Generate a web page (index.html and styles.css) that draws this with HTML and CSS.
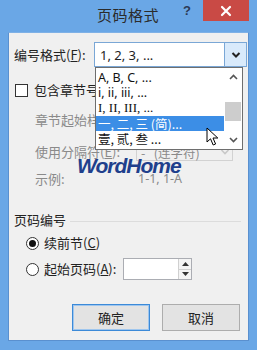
FILE: index.html
```html
<!DOCTYPE html>
<html>
<head>
<meta charset="utf-8">
<link rel="stylesheet" href="styles.css">
</head>
<body>
<div class="window">
  <div class="titlebar">
    <div class="title">页码格式</div>
    <div class="help">?</div>
    <div class="close">
      <svg width="12" height="12" viewBox="0 0 12 12"><path d="M2 2 L10 10 M10 2 L2 10" stroke="#fff" stroke-width="2.2" stroke-linecap="round"/></svg>
    </div>
  </div>
  <div class="client">
    <div class="row row-format">
      <span class="label">编号格式(<u>F</u>):</span>
      <div class="select focus">
        <span class="sel-text">1, 2, 3, ...</span>
        <span class="sel-btn focus-btn">
          <svg width="10" height="8" viewBox="0 0 10 8"><path d="M1.5 2 L5 5.5 L8.5 2" stroke="#222" stroke-width="2" fill="none"/></svg>
        </span>
      </div>
    </div>

    <div class="row row-check">
      <span class="checkbox"></span>
      <span class="label">包含章节号(<u>N</u>)</span>
    </div>

    <div class="indent">
      <div class="row row-sub">
        <span class="label dis">章节起始样式(<u>P</u>):</span>
        <div class="select dis-sel small"><span class="sel-text">标题 1</span></div>
      </div>
      <div class="row row-sub">
        <span class="label dis">使用分隔符(<u>E</u>):</span>
        <div class="select dis-sel small">
          <span class="sel-text">-&nbsp;&nbsp; (连字符)</span>
          <span class="sel-btn dis-btn">
            <svg width="10" height="8" viewBox="0 0 10 8"><path d="M1.5 2 L5 5.5 L8.5 2" stroke="#c8c8c8" stroke-width="1.6" fill="none"/></svg>
          </span>
        </div>
      </div>
      <div class="row row-example">
        <span class="label dis ex-label">示例:</span>
        <span class="label dis ex-val">1-1, 1-A</span>
      </div>
    </div>

    <div class="group-head">
      <span class="label">页码编号</span>
      <span class="rule"></span>
    </div>

    <div class="row row-radio">
      <span class="radio checked"><span class="dot"></span></span>
      <span class="label">续前节(<u>C</u>)</span>
    </div>
    <div class="row row-radio2">
      <span class="radio"></span>
      <span class="label">起始页码(<u>A</u>):</span>
      <div class="spin">
        <span class="spin-field"></span>
        <span class="spin-btns">
          <span class="spin-b"><svg width="7" height="4" viewBox="0 0 7 4"><path d="M0 4 L3.5 0 L7 4Z" fill="#333"/></svg></span>
          <span class="spin-b"><svg width="7" height="4" viewBox="0 0 7 4"><path d="M0 0 L3.5 4 L7 0Z" fill="#333"/></svg></span>
        </span>
      </div>
    </div>

    <div class="buttons">
      <button class="btn default">确定</button>
      <button class="btn">取消</button>
    </div>

    <div class="dropdown">
      <div class="items">
        <div class="item">A, B, C, ...</div>
        <div class="item">i, ii, iii, ...</div>
        <div class="item serif">I, II, III, ...</div>
        <div class="item sel">一, 二, 三 (简)...</div>
        <div class="item">壹, 贰, 叁 ...</div>
      </div>
      <div class="scroll">
        <span class="sc-arrow"><svg width="9" height="6" viewBox="0 0 9 6"><path d="M1 5 L4.5 1.5 L8 5" stroke="#555" stroke-width="1.6" fill="none"/></svg></span>
        <span class="sc-track"><span class="sc-thumb"></span></span>
        <span class="sc-arrow"><svg width="9" height="6" viewBox="0 0 9 6"><path d="M1 1 L4.5 4.5 L8 1" stroke="#555" stroke-width="1.6" fill="none"/></svg></span>
      </div>
    </div>

    <div class="watermark">WordHome</div>

    <svg class="cursor" width="13" height="20" viewBox="0 0 13 20"><path d="M1 1 L1 15 L4.5 11.8 L7.2 18 L9.6 17 L7 11 L11.8 11 Z" fill="#fff" stroke="#000" stroke-width="1"/></svg>
  </div>
</div>
</body>
</html>
```

FILE: styles.css
```css
* { box-sizing: border-box; }
html, body { margin: 0; padding: 0; }
body {
  width: 257px;
  height: 350px;
  overflow: hidden;
  font-family: "Noto Sans CJK SC", "Noto Sans", sans-serif;
  font-size: 13px;
  color: #222;
}
u { text-decoration: underline; text-underline-offset: 1px; }
.window {
  width: 257px;
  height: 350px;
  background: #6aa7e6;
  display: flex;
  flex-direction: column;
}
.titlebar {
  height: 32px;
  display: flex;
  align-items: flex-start;
  padding-left: 97px;
}
.title {
  font-size: 15px;
  color: #2b2b2b;
  line-height: 30px;
  letter-spacing: 0.5px;
}
.help {
  margin-left: auto;
  margin-right: 12px;
  font-family: "Liberation Sans", sans-serif;
  font-weight: bold;
  font-size: 13px;
  color: #2c3a55;
  line-height: 22px;
}
.close {
  width: 46px;
  height: 21px;
  margin-right: 8px;
  background: #c94a45;
  display: flex;
  align-items: center;
  justify-content: center;
}
.client {
  position: relative;
  margin: 0 8px;
  height: 309px;
  background: #f0f0f0;
  border: 1px solid #5a90cf;
  border-top-color: #7fb1e6;
  padding: 9px 0 0 5px;
}
.row { display: flex; align-items: center; }
.label { white-space: nowrap; line-height: 16px; }
.dis { color: #8a8a8a; }

.row-format { height: 25px; }
.row-format .label { width: 80px; }
.select {
  display: flex;
  align-items: center;
  background: #fff;
  border: 1px solid #7aa7d6;
  height: 25px;
  width: 153px;
}
.sel-text {
  flex: 1;
  padding-left: 5px;
  font-family: "Noto Sans", "Noto Sans CJK SC", sans-serif;
  font-size: 13px;
  white-space: nowrap;
  overflow: hidden;
}
.sel-btn {
  width: 22px;
  height: 100%;
  display: flex;
  align-items: center;
  justify-content: center;
}
.focus-btn {
  background: #d9eafb;
  border-left: 1px solid #7aa7d6;
}

.row-check { margin-top: 16px; height: 14px; }
.checkbox {
  width: 13px;
  height: 13px;
  border: 1px solid #333;
  background: #fff;
  margin: 0 6px 0 1px;
}

.indent { padding-left: 21px; margin-top: 14px; }
.row-sub { height: 18px; margin-bottom: 14px; }
.row-sub .label { width: 101px; }
.dis-sel {
  border-color: #d2d2d2;
  background: #f0f0f0;
  width: 97px;
  height: 18px;
  color: #8a8a8a;
}
.dis-sel .sel-text { font-family: "Noto Sans CJK SC", sans-serif; font-size: 12.5px; padding-left: 4px; }
.dis-btn { width: 14px; }
.row-example { margin-top: -4px; }
.ex-label { width: 103px; }
.ex-val { font-family: "Noto Sans", sans-serif; font-size: 12.5px; }

.group-head {
  display: flex;
  align-items: center;
  margin-top: 25px;
  padding-right: 7px;
}
.rule { flex: 1; height: 1px; background: #dcdcdc; margin-left: 4px; margin-top: 3px; }

.row-radio { margin-top: 7px; padding-left: 12px; height: 16px; }
.row-radio2 { margin-top: 7px; padding-left: 12px; height: 22px; }
.radio {
  width: 13px;
  height: 13px;
  border: 1px solid #333;
  border-radius: 50%;
  background: #fff;
  margin-right: 5px;
  display: flex;
  align-items: center;
  justify-content: center;
}
.dot { width: 7px; height: 7px; border-radius: 50%; background: #111; }
.spin {
  margin-left: 7px;
  width: 69px;
  height: 22px;
  border: 1px solid #abadb3;
  background: #fff;
  display: flex;
}
.spin-field { flex: 1; }
.spin-btns {
  width: 13px;
  display: flex;
  flex-direction: column;
  border-left: 1px solid #d0d0d0;
}
.spin-b {
  flex: 1;
  display: flex;
  align-items: center;
  justify-content: center;
  background: #f4f4f4;
}
.spin-b + .spin-b { border-top: 1px solid #d0d0d0; }

.buttons {
  display: flex;
  justify-content: flex-end;
  gap: 12px;
  margin-top: 24px;
  padding-right: 8px;
}
.btn {
  width: 78px;
  height: 27px;
  background: #e3e3e3;
  border: 1px solid #adadad;
  font-family: "Noto Sans CJK SC", sans-serif;
  font-size: 13px;
  color: #222;
  padding: 0;
}
.btn.default { border: 1px solid #3c8ad8; box-shadow: inset 0 0 0 1px #9fc6ee; }

.dropdown {
  position: absolute;
  left: 86px;
  top: 34px;
  width: 148px;
  height: 83px;
  background: #fff;
  border: 1px solid #6e6e6e;
  display: flex;
}
.items { flex: 1; padding-top: 2px; }
.item {
  height: 15px;
  line-height: 15px;
  padding-left: 2px;
  font-family: "Noto Sans", "Noto Sans CJK SC", sans-serif;
  font-size: 12.5px;
  color: #111;
  white-space: nowrap;
}
.item.serif { font-family: "Liberation Serif", "Noto Sans CJK SC", serif; font-size: 13px; }
.item.sel { background: #3c8ee6; color: #fff; margin-top: 1px; font-family: "Noto Sans CJK SC", sans-serif; }
.item:last-child { font-family: "Noto Sans CJK SC", sans-serif; }
.scroll {
  width: 18px;
  display: flex;
  flex-direction: column;
  background: #fff;
}
.sc-arrow { height: 18px; display: flex; align-items: center; justify-content: center; }
.sc-track { flex: 1; padding-top: 16px; display: flex; justify-content: center; }
.sc-thumb { width: 16px; height: 19px; background: #cdcdcd; }

.watermark {
  position: absolute;
  left: 68px;
  top: 121px;
  font-family: "Liberation Sans", sans-serif;
  font-weight: bold;
  font-style: italic;
  font-size: 21px;
  letter-spacing: -1px;
  color: #203f8c;
  line-height: 24px;
}
.cursor {
  position: absolute;
  left: 197px;
  top: 94px;
}
```
